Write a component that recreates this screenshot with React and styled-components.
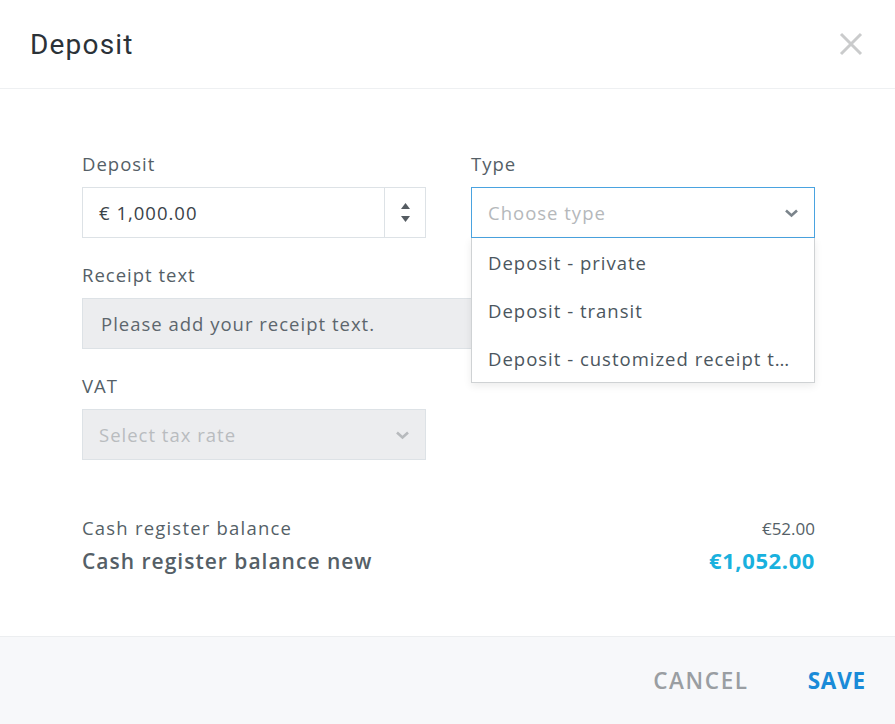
import React from 'react';
import styled, { createGlobalStyle } from 'styled-components';

const GlobalStyle = createGlobalStyle`
  html, body {
    margin: 0;
    padding: 0;
    background: #fff;
  }
  body {
    font-family: "Open Sans", "Noto Sans", sans-serif;
    color: #3a4349;
  }
  * {
    box-sizing: border-box;
  }
`;

const Dialog = styled.div`
  width: 895px;
  height: 724px;
  display: flex;
  flex-direction: column;
  background: #fff;
`;

const Header = styled.div`
  height: 89px;
  flex: none;
  display: flex;
  align-items: center;
  justify-content: space-between;
  padding: 0 30px 0 30px;
  border-bottom: 1px solid #eef0f2;
`;

const Title = styled.h1`
  margin: 0;
  font-family: Roboto, "Open Sans", sans-serif;
  font-weight: 400;
  font-size: 28px;
  color: #2b3238;
  letter-spacing: 1.2px;
`;

const CloseButton = styled.button`
  border: 0;
  background: none;
  padding: 0;
  width: 28px;
  height: 28px;
  display: flex;
  align-items: center;
  justify-content: center;
  cursor: pointer;
`;

const Body = styled.div`
  flex: 1;
  padding: 63px 80px 0 82px;
`;

const Grid = styled.div`
  display: grid;
  grid-template-columns: 344px 344px;
  column-gap: 45px;
  row-gap: 25px;
`;

const Field = styled.div`
  position: relative;
  grid-column: ${p => (p.$wide ? '1 / span 2' : 'auto')};
  display: flex;
  flex-direction: column;
`;

const Label = styled.label`
  font-size: 18.5px;
  letter-spacing: 1px;
  line-height: 24px;
  color: #555f67;
  margin-bottom: 11px;
`;

const Box = styled.div`
  height: 51px;
  display: flex;
  align-items: center;
  border: 1px solid ${p => (p.$focused ? '#4aa3e0' : '#dde2e6')};
  background: ${p => (p.$disabled ? '#ecedef' : '#fff')};
  font-size: 18.5px;
  letter-spacing: 1px;
`;

const Value = styled.div`
  flex: 1;
  padding-left: ${p => (p.$inset ? '18px' : '16px')};
  color: ${p => p.$color || '#3a4349'};
  white-space: nowrap;
  overflow: hidden;
`;

const Spinner = styled.div`
  width: 41px;
  height: 100%;
  border-left: 1px solid #dde2e6;
  display: flex;
  flex-direction: column;
  align-items: center;
  justify-content: center;
  gap: 7px;
`;

const Chevron = styled.div`
  width: 46px;
  display: flex;
  justify-content: center;
  color: ${p => p.$color};
`;

const Menu = styled.ul`
  position: absolute;
  top: 100%;
  left: 0;
  right: 0;
  margin: 0;
  padding: 0;
  list-style: none;
  background: #fff;
  border: 1px solid #cfd2d4;
  border-top: 0;
  box-shadow: 0 3px 8px rgba(0, 0, 0, 0.08);
  z-index: 2;
`;

const MenuItem = styled.li`
  height: 48px;
  display: flex;
  align-items: center;
  padding: 0 16px;
  font-size: 18.5px;
  letter-spacing: 1px;
  color: #4b565e;
  white-space: nowrap;
  overflow: hidden;
  span {
    overflow: hidden;
    text-overflow: ellipsis;
  }
`;

const Balance = styled.div`
  margin-top: 55px;
  display: flex;
  flex-direction: column;
  gap: 5px;
`;

const BalanceRow = styled.div`
  display: flex;
  justify-content: space-between;
  align-items: baseline;
  font-size: ${p => (p.$strong ? '21px' : '18.5px')};
  letter-spacing: ${p => (p.$strong ? '1px' : '1.2px')};
  font-weight: ${p => (p.$strong ? 600 : 400)};
  color: #555f67;
`;

const Amount = styled.span`
  color: ${p => (p.$accent ? '#19b1de' : '#555f67')};
  font-size: ${p => (p.$accent ? '22px' : '17px')};
  letter-spacing: ${p => (p.$accent ? '0.6px' : '0')};
  font-weight: ${p => (p.$accent ? 700 : 400)};
`;

const Footer = styled.div`
  height: 88px;
  flex: none;
  background: #f7f8fa;
  border-top: 1px solid #eceef0;
  display: flex;
  align-items: center;
  justify-content: flex-end;
  gap: 59px;
  padding-right: 29px;
`;

const Action = styled.button`
  border: 0;
  background: none;
  padding: 0;
  font-family: "Open Sans", sans-serif;
  font-size: 22.5px;
  font-weight: ${p => (p.$primary ? 700 : 600)};
  letter-spacing: ${p => (p.$primary ? '0.8px' : '1.6px')};
  color: ${p => (p.$primary ? '#1a8bd8' : '#9a9ea2')};
  cursor: pointer;
`;

const ChevronIcon = () => (
  <svg width="15" height="10" viewBox="0 0 15 10">
    <path d="M2 2.5 L7.5 7.5 L13 2.5" fill="none" stroke="currentColor" strokeWidth="2.6" />
  </svg>
);

const types = ['Deposit - private', 'Deposit - transit', 'Deposit - customized receipt text'];

export default function App() {
  return (
    <>
      <GlobalStyle />
      <Dialog>
        <Header>
          <Title>Deposit</Title>
          <CloseButton aria-label="Close">
            <svg width="24" height="24" viewBox="0 0 24 24">
              <path d="M2 2 L22 22 M22 2 L2 22" stroke="#cacbcc" strokeWidth="3" />
            </svg>
          </CloseButton>
        </Header>
        <Body>
          <Grid>
            <Field>
              <Label>Deposit</Label>
              <Box>
                <Value>€ 1,000.00</Value>
                <Spinner>
                  <svg width="9" height="6" viewBox="0 0 9 6">
                    <path d="M4.5 0 L9 6 L0 6 Z" fill="#555c62" />
                  </svg>
                  <svg width="9" height="6" viewBox="0 0 9 6">
                    <path d="M0 0 L9 0 L4.5 6 Z" fill="#555c62" />
                  </svg>
                </Spinner>
              </Box>
            </Field>
            <Field>
              <Label>Type</Label>
              <Box $focused>
                <Value $color="#b5b8bb">Choose type</Value>
                <Chevron $color="#7b848b">
                  <ChevronIcon />
                </Chevron>
              </Box>
              <Menu>
                {types.map(t => (
                  <MenuItem key={t}>
                    <span>{t}</span>
                  </MenuItem>
                ))}
              </Menu>
            </Field>
            <Field $wide>
              <Label>Receipt text</Label>
              <Box $disabled>
                <Value $inset $color="#5d666d">Please add your receipt text.</Value>
              </Box>
            </Field>
            <Field>
              <Label>VAT</Label>
              <Box $disabled>
                <Value $color="#b9bcbf">Select tax rate</Value>
                <Chevron $color="#b7babd">
                  <ChevronIcon />
                </Chevron>
              </Box>
            </Field>
          </Grid>
          <Balance>
            <BalanceRow>
              <span>Cash register balance</span>
              <Amount>€52.00</Amount>
            </BalanceRow>
            <BalanceRow $strong>
              <span>Cash register balance new</span>
              <Amount $accent>€1,052.00</Amount>
            </BalanceRow>
          </Balance>
        </Body>
        <Footer>
          <Action>CANCEL</Action>
          <Action $primary>SAVE</Action>
        </Footer>
      </Dialog>
    </>
  );
}
